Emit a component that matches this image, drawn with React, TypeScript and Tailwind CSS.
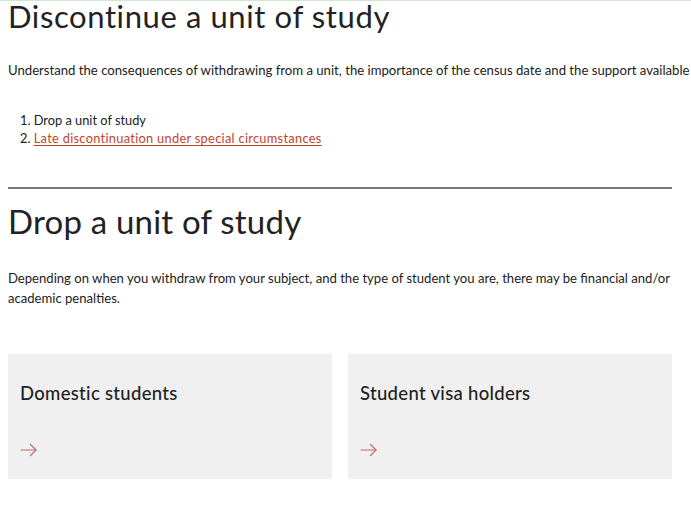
const cards = ["Domestic students", "Student visa holders"];

function Arrow() {
  return (
    <svg width="18" height="14" viewBox="0 0 18 14" fill="none" stroke="#c46a68" strokeWidth="1.2" strokeLinecap="round" strokeLinejoin="round">
      <path d="M1 7h15" />
      <path d="M10.5 1.5 16 7l-5.5 5.5" />
    </svg>
  );
}

export default function App() {
  return (
    <div className="min-h-[519px] w-[691px] overflow-hidden bg-white text-[#222] font-['Lato',sans-serif]">
      <div className="h-px bg-[#cfe8cf]" />
      <div className="pl-2 w-[672px]">
        <h1 className="text-[31px] leading-[30px] tracking-[0.6px] text-[#222]">
          Discontinue a unit of study
        </h1>

        <p className="mt-[29px] text-[13.15px] leading-5 whitespace-nowrap">
          Understand the consequences of withdrawing from a unit, the importance of the census date and the support available
        </p>

        <ol className="mt-[31px] pl-[12px] text-[12.8px] leading-[18px]">
          <li>1. Drop a unit of study</li>
          <li>
            2.{" "}
            <a href="#" className="text-[#c4442e] underline underline-offset-2 tracking-[0.3px]">
              Late discontinuation under special circumstances
            </a>
          </li>
        </ol>

        <hr className="mt-[40px] border-0 h-[2px] bg-[#777]" />

        <h2 className="mt-[12px] text-[33px] leading-[40px] tracking-[0.2px]">Drop a unit of study</h2>

        <p className="mt-[27px] -mr-[12px] text-[13.1px] leading-5">
          Depending on when you withdraw from your subject, and the type of student you are, there may be financial and/or
          academic penalties.
        </p>

        <div className="mt-[46px] grid grid-cols-2 gap-4">
          {cards.map((c) => (
            <a key={c} href="#" className="flex h-[125px] flex-col bg-[#f0f0f0] px-3 pt-[27px]">
              <span className="text-[18.5px] leading-6 font-medium tracking-[0.3px]">{c}</span>
              <span className="mt-[38px]">
                <Arrow />
              </span>
            </a>
          ))}
        </div>
      </div>
    </div>
  );
}
